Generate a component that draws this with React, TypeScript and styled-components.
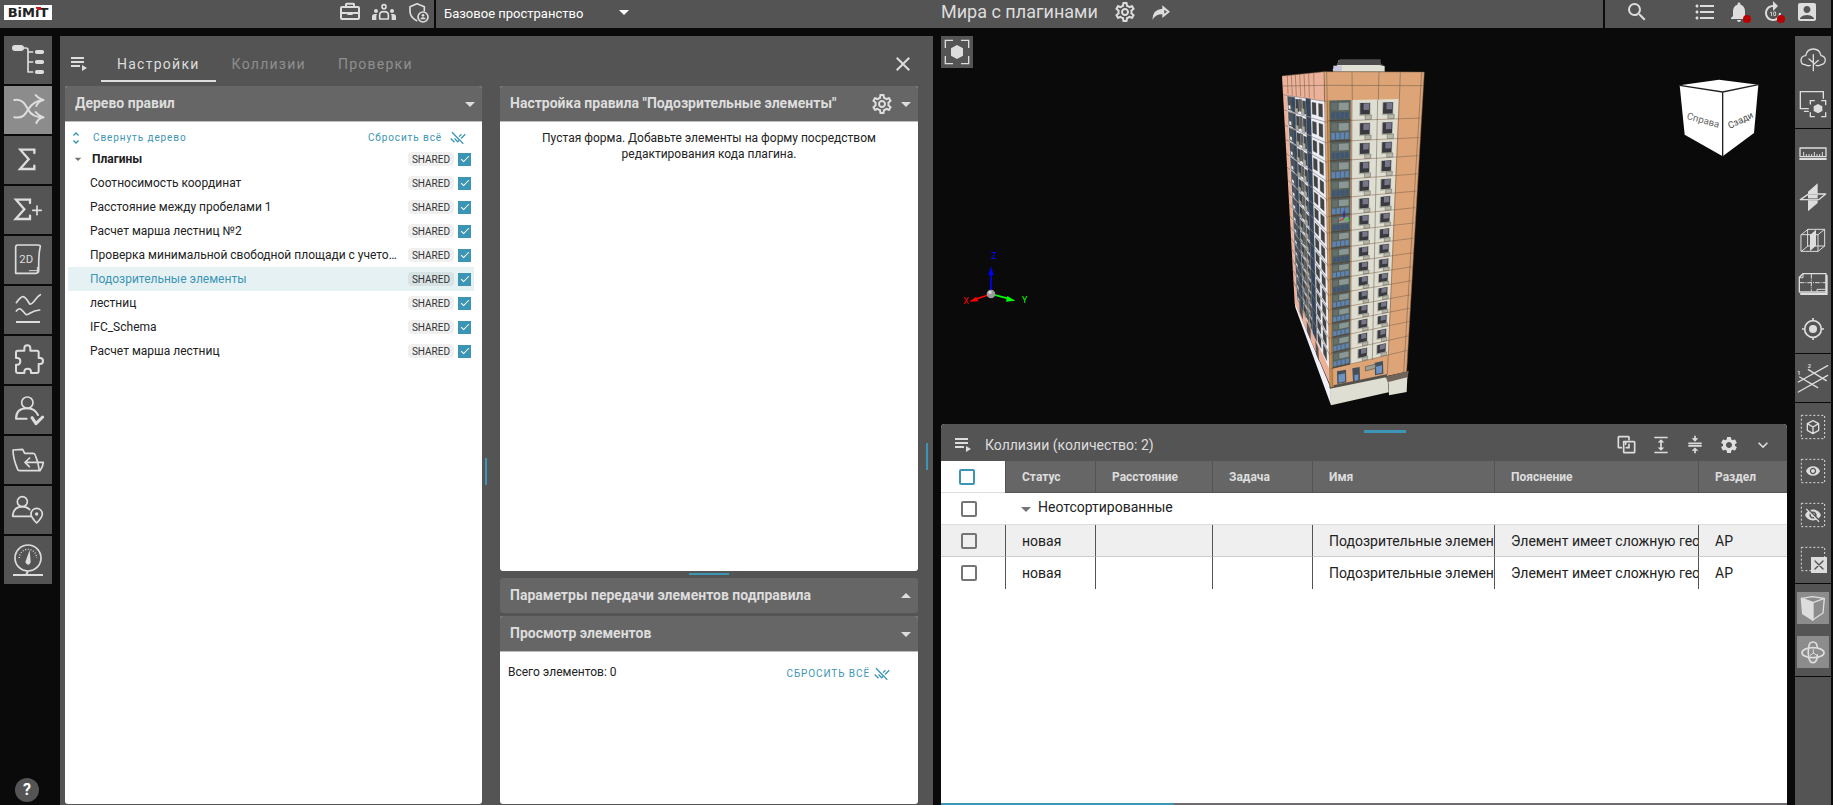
import React from "react";
import styled, { createGlobalStyle } from "styled-components";
import {
  MdAccountBox,
  MdArrowDropDown,
  MdArrowDropUp,
  MdClose,
  MdCompress,
  MdExpand,
  MdExpandMore,
  MdFormatListBulleted,
  MdForward10,
  MdNotifications,
  MdOutlineSettings,
  MdRemoveDone,
  MdSearch,
  MdSettings,
  MdUnfoldMore,
  MdVisibility,
  MdVisibilityOff,
} from "react-icons/md";

const color = {
  page: "#0a0a0a",
  panel: "#545454",
  header: "#666666",
  active: "#8c8c8c",
  light: "#dddddd",
  muted: "#8f8f8f",
  accent: "#3c95b4",
  text: "#222222",
  line: "#dddddd",
};

const GlobalStyle = createGlobalStyle`
  *, *::before, *::after { box-sizing: border-box; }
  html, body, #root { height: 100%; margin: 0; }
  body { background: ${color.page}; color: ${color.text}; font: 12px/16px Roboto, sans-serif; overflow: hidden; }
  button, select, input { font: inherit; color: inherit; margin: 0; }
  svg { display: block; flex: none; }
`;

/* ---------- page frame ---------- */

const Page = styled.div`
  display: grid;
  grid-template-rows: 28px minmax(0, 1fr);
  height: 100vh;
`;

const columns = "60px minmax(0, 873fr) 8px minmax(0, 846fr) 8px 38px";

const TopBar = styled.header`
  display: grid;
  grid-template-columns: ${columns};
  box-shadow: inset -2px 0 ${color.page};
  background: ${color.panel};
  color: ${color.light};
`;

const TopLeft = styled.div`
  grid-column: 1 / 4;
  display: flex;
`;

const TopTools = styled.div`
  display: flex;
  align-items: center;
  width: 436px;
  height: 28px;
  padding: 0 3px 4px 4px;
  border-right: 2px solid ${color.page};
`;

const Logo = styled.a`
  position: relative;
  width: 48px;
  height: 15px;
  margin-right: auto;
  background: #ffffff;
  color: #222222;
  font: bold 13px/16px "DejaVu Sans", sans-serif;
  text-align: center;
  text-decoration: none;
  overflow: hidden;
`;

const LogoDot = styled.i`
  position: absolute;
  left: 33px;
  top: 2px;
  width: 4px;
  height: 3px;
  background: #d8131b;
`;

const IconButton = styled.button<{ $w?: number }>`
  display: flex;
  align-items: center;
  justify-content: center;
  width: ${(p) => p.$w ?? 24}px;
  height: 24px;
  padding: 0;
  border: 0;
  background: none;
  color: ${color.light};
  cursor: pointer;
`;

const SpaceField = styled.label`
  position: relative;
  display: flex;
  align-items: center;
  height: 28px;
  svg {
    position: absolute;
    right: 4px;
    top: 0;
    color: #ffffff;
    pointer-events: none;
  }
`;

const SpaceSelect = styled.select`
  width: 204px;
  height: 28px;
  padding: 0 24px 0 8px;
  border: 0;
  background: none;
  appearance: none;
  color: #ffffff;
  font-size: 13px;
`;

const TopRight = styled.div`
  grid-column: 4 / 7;
  display: flex;
  min-width: 0;
`;

const ProjectTitle = styled.h1`
  margin: 0 14px 0 0;
  font-size: 18px;
  line-height: 24px;
  font-weight: 400;
  white-space: nowrap;
`;

const ProjectTools = styled.div`
  display: flex;
  gap: 10px;
`;

const UserTools = styled.nav`
  display: flex;
  gap: 10px;
  width: 230px;
  height: 28px;
  margin-left: auto;
  padding: 0 14px 0 20px;
  border-left: 2px solid ${color.page};
  > :first-child {
    margin-right: auto;
  }
`;

const Alerting = styled.span`
  position: relative;
  &::after {
    content: "";
    position: absolute;
    right: 0;
    top: 15px;
    width: 8px;
    height: 8px;
    border-radius: 50%;
    background: #b80000;
  }
`;

const Body = styled.main`
  display: grid;
  grid-template-columns: ${columns};
  padding-top: 8px;
  min-height: 0;
`;

/* ---------- left rail ---------- */

const LeftRail = styled.nav`
  grid-column: 1;
  display: flex;
  flex-direction: column;
  gap: 2px;
  padding: 0 8px 3px 4px;
`;

const RailButton = styled.button<{ $active?: boolean }>`
  width: 48px;
  height: 48px;
  padding: 0;
  border: 0;
  background: ${(p) => (p.$active ? color.active : color.panel)};
  color: ${color.light};
  cursor: pointer;
`;

const HelpButton = styled.button`
  width: 24px;
  height: 24px;
  margin: auto 0 0 11px;
  padding: 0;
  border: 0;
  border-radius: 50%;
  background: ${color.panel};
  color: #ffffff;
  font-size: 16px;
  font-weight: 700;
`;

/* ---------- rules panel ---------- */

const RulesPanel = styled.section`
  grid-column: 2;
  display: grid;
  grid-template-rows: 50px minmax(0, 1fr);
  background: ${color.panel};
  min-width: 0;
  min-height: 0;
`;

const PanelHead = styled.div`
  display: flex;
  align-items: center;
  padding: 6px 18px 0 7px;
`;

const Tabs = styled.div`
  display: flex;
  flex: 1;
  margin-left: 10px;
`;

const Tab = styled.button<{ $active?: boolean }>`
  height: 36px;
  padding: 2px 16px 0;
  border: 0;
  border-bottom: 2px solid ${(p) => (p.$active ? color.light : "transparent")};
  background: none;
  color: ${(p) => (p.$active ? color.light : color.muted)};
  font-size: 14px;
  letter-spacing: 0.09em;
  cursor: pointer;
`;

const PanelBody = styled.div`
  display: grid;
  grid-template-columns: 5px minmax(0, 417fr) 18px minmax(0, 418fr) 15px;
  padding-bottom: 1px;
  min-height: 0;
`;

const ColumnSplitter = styled.div<{ $inset: number; $top: number }>`
  display: flex;
  align-items: center;
  padding: ${(p) => p.$top}px 0 0 ${(p) => p.$inset}px;
  &::before {
    content: "";
    width: 2px;
    height: 27px;
    background: ${color.accent};
  }
`;

const TreeColumn = styled.div`
  grid-column: 2;
  display: flex;
  flex-direction: column;
`;

const FormColumn = styled.div`
  grid-column: 4;
  display: flex;
  flex-direction: column;
`;

const Card = styled.section<{ $height?: number }>`
  display: flex;
  flex-direction: column;
  flex: ${(p) => (p.$height ? `0 0 ${p.$height}px` : "1 1 0")};
  min-height: 0;
  border-radius: 3px;
  background: #ffffff;
  overflow: hidden;
`;

const CardHead = styled.header<{ $closed?: boolean }>`
  display: flex;
  align-items: center;
  flex: none;
  height: ${(p) => (p.$closed ? 35 : 36)}px;
  padding-left: 10px;
  border-bottom: ${(p) => (p.$closed ? "0" : "1px solid #bdbdbd")};
  background: ${color.header};
  color: ${color.light};
`;

const CardTitle = styled.h2`
  flex: 1;
  margin: 0;
  padding-bottom: 2px;
  font-size: 14px;
  line-height: 16px;
  font-weight: 700;
  white-space: nowrap;
  overflow: hidden;
`;

const RowSplitter = styled.div`
  display: flex;
  justify-content: center;
  flex: none;
  height: 7px;
  padding-top: 2px;
  &::before {
    content: "";
    width: 40px;
    height: 2px;
    background: ${color.accent};
  }
`;

const CardGap = styled.div`
  flex: none;
  height: 3px;
`;

const TreeTools = styled.div`
  display: flex;
  justify-content: space-between;
  height: 25px;
  padding: 6px 16px 0 3px;
`;

const TextButton = styled.button<{ $gap: number }>`
  display: flex;
  align-items: center;
  gap: ${(p) => p.$gap}px;
  height: 20px;
  padding: 0;
  border: 0;
  background: none;
  color: ${color.accent};
  font-size: 10px;
  letter-spacing: 0.09em;
  cursor: pointer;
`;

const TreeList = styled.ul`
  margin: 0;
  padding: 0 8px 0 3px;
  list-style: none;
`;

const TreeRow = styled.li<{ $selected?: boolean; $group?: boolean }>`
  display: flex;
  align-items: center;
  height: 24px;
  padding: 0 3px 0 ${(p) => (p.$group ? 2 : 22)}px;
  background: ${(p) => (p.$selected ? "#e5f1f3" : "transparent")};
  color: ${(p) => (p.$selected ? color.accent : color.text)};
  font-weight: ${(p) => (p.$group ? 700 : 400)};
  > svg {
    margin-right: 6px;
    color: #757575;
  }
`;

const RowLabel = styled.label`
  flex: 1;
  min-width: 0;
  margin-right: 10px;
  overflow: hidden;
  text-overflow: ellipsis;
  white-space: nowrap;
`;

const Badge = styled.span`
  height: 14px;
  margin-right: 4px;
  padding: 0 4px;
  border-radius: 4px;
  background: rgba(0, 0, 0, 0.06);
  color: #333333;
  font-size: 10px;
  line-height: 15px;
  font-weight: 400;
`;

const Tick = styled.input`
  position: relative;
  width: 13px;
  height: 13px;
  appearance: none;
  border: 1px solid ${color.accent};
  background: #ffffff;
  &:checked {
    background: ${color.accent};
  }
  &:checked::after {
    content: "";
    position: absolute;
    left: 4px;
    top: 0;
    width: 4px;
    height: 8px;
    border: solid #ffffff;
    border-width: 0 1px 1px 0;
    transform: rotate(45deg);
  }
`;

const EmptyForm = styled.p`
  margin: 8px 40px;
  text-align: center;
`;

const ElementTools = styled.div`
  display: flex;
  justify-content: space-between;
  padding: 12px 28px 0 8px;
`;

/* ---------- viewer ---------- */

const Workspace = styled.div`
  grid-column: 4;
  display: grid;
  grid-template-rows: minmax(0, 388fr) minmax(0, 381fr);
  min-height: 0;
`;

const Viewer = styled.section`
  position: relative;
  overflow: hidden;
`;

const FocusButton = styled.button`
  width: 32px;
  height: 32px;
  padding: 0;
  border: 0;
  background: ${color.panel};
  color: ${color.light};
`;

const Model = styled.svg`
  position: absolute;
  left: calc(50% - 94px);
  top: 14px;
`;

const AxisGizmo = styled.svg`
  position: absolute;
  left: 19px;
  top: 214px;
`;

const ViewCube = styled.svg`
  position: absolute;
  right: 28px;
  top: 43px;
`;

/* ---------- collisions ---------- */

const Collisions = styled.section`
  display: flex;
  flex-direction: column;
  border-radius: 4px 4px 0 0;
  background: #ffffff;
  overflow: hidden;
  min-height: 0;
`;

const CollisionsHead = styled.header`
  position: relative;
  display: flex;
  align-items: center;
  flex: none;
  height: 37px;
  padding: 5px 14px 0 13px;
  background: ${color.panel};
  color: ${color.light};
  &::before {
    content: "";
    position: absolute;
    left: 50%;
    top: 6px;
    width: 42px;
    height: 3px;
    background: ${color.accent};
  }
`;

const CollisionsTitle = styled.h2`
  flex: 1;
  margin: 0 0 0 13px;
  font-size: 14px;
  line-height: 16px;
  font-weight: 400;
`;

const HeadTools = styled.div`
  display: flex;
  gap: 14px;
`;

const Grid = styled.table`
  width: 100%;
  table-layout: fixed;
  border-collapse: separate;
  border-spacing: 0;
`;

const Col = styled.col<{ $w?: number }>`
  width: ${(p) => (p.$w ? `${p.$w}px` : "auto")};
`;

const HeadCell = styled.th`
  height: 32px;
  padding: 0 0 0 16px;
  border-left: 1px solid ${color.panel};
  border-bottom: 1px solid ${color.panel};
  background: ${color.header};
  color: ${color.light};
  font-size: 12px;
  font-weight: 700;
  text-align: left;
`;

const SelectAllCell = styled.th`
  height: 32px;
  padding: 0 0 0 18px;
  border-bottom: 1px solid ${color.line};
  text-align: left;
`;

const SelectCell = styled.td`
  height: 32px;
  padding: 0 0 0 20px;
  border-bottom: 1px solid ${color.line};
`;

const GroupCell = styled.td`
  padding: 0 0 4px 9px;
  border-bottom: 1px solid ${color.line};
  font-size: 14px;
`;

const GroupToggle = styled.button`
  display: flex;
  align-items: center;
  height: 24px;
  padding: 0;
  border: 0;
  background: none;
  svg {
    margin-top: 4px;
    color: #757575;
  }
`;

const DataRow = styled.tr<{ $shaded?: boolean }>`
  background: ${(p) => (p.$shaded ? "#efefef" : "transparent")};
  td {
    border-bottom: ${(p) => (p.$shaded ? "1px solid #cccccc" : "0")};
  }
`;

const DataCell = styled.td`
  height: 32px;
  padding: 0 0 0 16px;
  border-left: 1px solid ${color.panel};
  font-size: 14px;
  white-space: nowrap;
  overflow: hidden;
`;

const Box = styled.input<{ $accent?: boolean }>`
  display: block;
  width: 16px;
  height: 16px;
  appearance: none;
  border: 2px solid ${(p) => (p.$accent ? color.accent : "#757575")};
  border-radius: 2px;
  &:checked {
    background: ${color.accent};
  }
`;

const ScrollTrack = styled.div`
  display: grid;
  grid-template-columns: 233fr 613fr;
  flex: none;
  height: 2px;
  margin-top: auto;
  background: #6e6a6e;
  &::before {
    content: "";
    background: ${color.accent};
  }
`;

/* ---------- right rail ---------- */

const RightRail = styled.nav`
  grid-column: 6;
  display: flex;
  flex-direction: column;
  margin-right: 2px;
  background: ${color.panel};
`;

const ToolGroup = styled.div`
  padding: 2px 0;
  border-bottom: 1px solid ${color.page};
`;

const ToolSlot = styled.div`
  display: flex;
  align-items: center;
  justify-content: center;
  height: 44px;
`;

const ToolButton = styled.button<{ $active?: boolean }>`
  width: 32px;
  height: 32px;
  padding: 0;
  border: 0;
  background: ${(p) => (p.$active ? color.active : "none")};
  color: ${color.light};
  cursor: pointer;
`;

/* ---------- icons ---------- */

const Drawing = ({ size, box, width = 6, children }: { size: number; box: number; width?: number; children: React.ReactNode }) => (
  <svg
    width={size}
    height={size}
    viewBox={`0 0 ${box} ${box}`}
    fill="none"
    stroke="currentColor"
    strokeWidth={width}
    strokeLinecap="round"
    strokeLinejoin="round"
    aria-hidden
  >
    {children}
  </svg>
);

const PlaylistIcon = () => (
  <svg width="18" height="16" viewBox="0 0 18 16" fill="currentColor" aria-hidden>
    <path d="M1 1h13v2H1zM1 5h13v2H1zM1 9h9v2H1zM12 9l5 3-5 3z" />
  </svg>
);

const BriefcaseIcon = () => (
  <Drawing size={24} box={72}>
    <rect x="9" y="21" width="54" height="36" rx="3" />
    <path d="M24 20v-7q0-2 2-2h20q2 0 2 2v7M9 39h16M47 39h16" />
    <rect x="28" y="36" width="16" height="9" fill="currentColor" stroke="none" />
    <path d="M26 39h20" strokeWidth="4" />
  </Drawing>
);

const MeetingIcon = () => (
  <Drawing size={24} box={72} width={5}>
    <circle cx="36" cy="20" r="6" />
    <path d="M23 57V44q0-9 13-9t13 9v13z" />
    <g fill="currentColor" stroke="none">
      <circle cx="12" cy="33" r="6" />
      <circle cx="60" cy="33" r="6" />
      <path d="M0 60V50q0-8 9-8h6q-2 4-2 8v10zM72 60V50q0-8-9-8h-6q2 4 2 8v10z" />
    </g>
  </Drawing>
);

const ShieldUserIcon = () => (
  <Drawing size={24} box={72} width={5}>
    <path d="M52 32V20L30 11 9 20v14q0 18 20 28" />
    <circle cx="48" cy="51" r="15" />
    <g fill="currentColor" stroke="none">
      <circle cx="48" cy="46" r="4" />
      <path d="M40 58q0-6 8-6t8 6z" />
    </g>
  </Drawing>
);

const ShareIcon = () => (
  <svg width="24" height="24" viewBox="0 0 72 72" fill="currentColor" aria-hidden>
    <path d="M40 16l23 19-23 19V43Q22 42 10 59q1-31 30-33z" />
    <path d="M46 29l8 6-8 6z" fill={color.panel} />
  </svg>
);

const MergeIcon = () => (
  <Drawing size={20} box={60} width={5}>
    <path d="M36 14V7q0-2-2-2H6Q4 5 4 7v29q0 2 2 2h7" />
    <path d="M28 38h8V28M20 28v-8h6" />
    <path d="M20 30v21q0 2 2 2h29q2 0 2-2V22q0-2-2-2H28q-2 0-2 2v6" />
  </Drawing>
);

const FocusShape = () => (
  <svg width="32" height="32" viewBox="0 0 96 96" aria-hidden>
    <path d="M13 36V13h23M60 13h23v23M83 60v23H60M36 83H13V60" fill="none" stroke="currentColor" strokeWidth="4" />
    <path d="M48 27l18 10v22L48 69 30 59V37z" fill="currentColor" />
  </svg>
);

const railIcons: { label: string; art: React.ReactNode; active?: boolean }[] = [
  {
    label: "Дерево",
    art: (
      <>
        <g fill="currentColor" stroke="none">
          <rect x="24" y="27" width="36" height="18" rx="9" />
          <rect x="93" y="42" width="27" height="12" rx="5" />
          <rect x="93" y="72" width="27" height="12" rx="5" />
          <rect x="93" y="102" width="27" height="12" rx="5" />
        </g>
        <path d="M58 36h8q6 0 6 6v66h14M72 48h14M72 78h14" strokeWidth="5" />
      </>
    ),
  },
  {
    label: "Коллизии",
    active: true,
    art: (
      <>
        <path d="M31 42c26-4 34 15 42 30s22 22 45 22" />
        <path d="M31 94c26 4 34-10 42-24s22-26 45-28" />
        <path d="M95 27q8 11 23 15-15 3-21 18M95 78q8 11 23 16-15 3-21 17" />
      </>
    ),
  },
  { label: "Сумма", art: <path d="M91 51V41H49l25 29-26 29h43V89" strokeWidth="7" strokeLinejoin="miter" /> },
  {
    label: "Сумма плюс",
    art: (
      <>
        <path d="M78 51V41H36l25 29-26 29h43V89" strokeWidth="7" strokeLinejoin="miter" />
        <path d="M86 73h26M99 60v26" strokeWidth="5" />
      </>
    ),
  },
  {
    label: "Чертежи",
    art: (
      <>
        <path d="M35 112V34q0-7 6-7h60q8 0 8 4-5 20-5 60v12q0 9-8 9z" strokeWidth="5" />
        <path d="M76 104h24M100 94v14" strokeWidth="3" />
        <text x="46" y="80" fontSize="34" fill="currentColor" stroke="none">
          2D
        </text>
      </>
    ),
  },
  {
    label: "Графики",
    art: (
      <>
        <path d="M37 50q13-18 20-18t20 22q6 3 18-14 6-10 14-14" strokeWidth="5" />
        <path d="M37 75q8-10 14-5t14 15q4 3 14-4 12-7 28-9" strokeWidth="5" />
        <path d="M36 108h72" strokeLinecap="butt" />
      </>
    ),
  },
  {
    label: "Плагины",
    art: (
      <path d="M41 44h20v-7q0-9 9-9t9 9v7h20q5 0 5 5v17h4q9 0 9 9t-9 9h-4v21q0 6-6 6H81v-4q0-9-10-9t-10 9v4H42q-6 0-6-6V86h5q8-1 8-10t-8-10h-5V49q0-5 5-5z" />
    ),
  },
  {
    label: "Проверяющий",
    art: (
      <>
        <circle cx="70" cy="50" r="17" strokeWidth="5" />
        <path d="M68 98H36q0-31 34-31 22 0 32 20" />
        <path d="M84 95l12 18 20-20" strokeWidth="9" />
      </>
    ),
  },
  {
    label: "Импорт",
    art: (
      <>
        <path d="M106 104H47q-5 0-7-6-13-32-13-56l29-2 6 12h26q4 0 6 6 9 20 12 46z" strokeWidth="5" />
        <path d="M108 104q9-12 10-25H64M77 66L63 79l13 13" strokeWidth="5" />
      </>
    ),
  },
  {
    label: "Местоположение",
    art: (
      <>
        <circle cx="55" cy="47" r="15" strokeWidth="5" />
        <path d="M80 91H26q2-29 29-29 14 0 22 9" strokeWidth="5" />
        <path d="M98 111Q81 94 81 84a17 17 0 0 1 34 0q0 10-17 27z" strokeWidth="5" />
        <circle cx="98" cy="84" r="5" fill="currentColor" stroke="none" />
      </>
    ),
  },
  {
    label: "Показатели",
    art: (
      <>
        <circle cx="72" cy="66" r="39" strokeWidth="5" />
        <path d="M46 66a26 26 0 0 1 52 0" strokeWidth="4" strokeDasharray="3 5" strokeLinecap="butt" />
        <path d="M77 42l3 36q-2 9-8 8t-8-8z" fill="currentColor" stroke="none" />
        <path d="M72 106l-6 11M27 117h90" strokeLinecap="butt" />
      </>
    ),
  },
];

const Dashes = () => <rect x="13" y="13" width="70" height="70" strokeWidth="3" strokeDasharray="6 6" strokeLinecap="butt" />;

const toolGroups: { label: string; art: React.ReactNode; active?: boolean }[][] = [
  [
    {
      label: "Окружение",
      art: (
        <>
          <path d="M40 64q-8 3-16-2-12 0-12-14 1-12 14-13 4-20 23-20t23 20q12 2 13 13-1 12-12 14-8 5-16 2" strokeWidth="4" />
          <path d="M49 80V32M49 62l15-13M49 56L36 45" strokeWidth="4" />
        </>
      ),
    },
    {
      label: "Показать экран",
      art: (
        <>
          <path d="M34 62H10V11h69v20M22 70h12" strokeWidth="4" strokeLinejoin="miter" />
          <path d="M40 48V38h12M74 38h12v12M86 74v12H74M52 86H40V74" strokeWidth="4" strokeLinejoin="miter" />
          <path d="M63 48l13 7v14l-13 7-13-7V55z" fill="currentColor" stroke="none" />
        </>
      ),
    },
  ],
  [
    {
      label: "Линейка",
      art: (
        <>
          <rect x="9" y="33" width="78" height="26" strokeWidth="4" />
          <path d="M20 58V45M28 58v-7M36 58v-7M44 58v-7M52 58V45M60 58v-7M68 58v-7M76 58V45" strokeWidth="3" strokeLinecap="butt" />
          <path d="M7 66h82" strokeLinecap="butt" />
        </>
      ),
    },
    {
      label: "Сечение плоскостью",
      art: (
        <>
          <path d="M33 32L62 7v33H33zM33 58h29v8L33 91z" fill="currentColor" stroke="none" />
          <path d="M33 40h29v14H33z" fill="currentColor" stroke="none" />
          <path d="M33 40L10 56h55l21-17H62" strokeWidth="4" />
          <path d="M33 53h29" stroke={color.panel} strokeWidth="2" strokeLinecap="butt" />
        </>
      ),
    },
    {
      label: "Сечение объёмом",
      art: (
        <>
          <path d="M13 29h50v50H13zM33 13h50v50H33zM13 29l20-16M63 29l20-16M13 79l20-16M63 79l20-16" strokeWidth="3" />
          <path d="M39 30l18-16v48L39 78z" fill="currentColor" stroke="none" />
        </>
      ),
    },
    {
      label: "План этажа",
      art: (
        <>
          <path d="M18 14h69v55H7V25z" strokeWidth="4" />
          <path d="M89 20v55H12" strokeWidth="6" strokeLinejoin="miter" />
          <path d="M43 15v52M8 41h78" strokeWidth="3" strokeDasharray="14 3 3 3" strokeLinecap="butt" />
          <path d="M60 67v-6h24M7 25l11-11v11z" strokeWidth="3" />
        </>
      ),
    },
    {
      label: "Центрировать",
      art: (
        <>
          <circle cx="48" cy="48" r="25" strokeWidth="5" />
          <circle cx="48" cy="48" r="12" fill="currentColor" stroke="none" />
          <path d="M48 15v9M48 72v9M15 48h9M72 48h9" strokeWidth="5" strokeLinecap="butt" />
        </>
      ),
    },
  ],
  [
    {
      label: "Оси",
      art: (
        <>
          <path d="M4 60L92 11M4 90l88-50M8 45l54 32M34 23l54 33" strokeWidth="4" />
          <text x="1" y="38" fontSize="17" fontWeight="700" fill="currentColor" stroke="none">
            1
          </text>
          <text x="32" y="18" fontSize="17" fontWeight="700" fill="currentColor" stroke="none">
            2
          </text>
        </>
      ),
    },
  ],
  [
    {
      label: "Выделить объект",
      art: (
        <>
          <Dashes />
          <path d="M48 29l17 9v20l-17 10-17-10V38zM31 38l17 10 17-10M48 48v20" strokeWidth="4" />
        </>
      ),
    },
    {
      label: "Показать",
      art: (
        <>
          <Dashes />
          <MdVisibility x="25" y="25" size={46} strokeWidth={0} />
        </>
      ),
    },
    {
      label: "Скрыть",
      art: (
        <>
          <Dashes />
          <MdVisibilityOff x="22" y="22" size={52} strokeWidth={0} />
        </>
      ),
    },
    {
      label: "Сбросить выделение",
      art: (
        <>
          <Dashes />
          <rect x="42" y="42" width="48" height="48" fill="currentColor" stroke="none" />
          <path d="M54 54l24 24M78 54L54 78" stroke={color.panel} strokeWidth="4" />
        </>
      ),
    },
  ],
  [
    {
      label: "Объёмный вид",
      active: true,
      art: (
        <>
          <path d="M14 20l33 13v50L18 64z" fill="currentColor" />
          <path d="M14 19l32-5 36 5-34 13zM82 19l-4 44-31 21" strokeWidth="4" />
        </>
      ),
    },
    {
      label: "Вращение",
      active: true,
      art: (
        <>
          <ellipse cx="48" cy="50" rx="33" ry="15" strokeWidth="5" />
          <path d="M35 35q1-17 13-17t13 17M35 35q-3 14 0 28 3 17 13 17t13-17q-1-2 0-6" strokeWidth="5" />
          <path d="M49 41v10l-9 7M49 51l10 7" strokeWidth="3" />
        </>
      ),
    },
  ],
];

/* ---------- building drawing ---------- */

type Pt = [number, number];
const floorY = [150, 211, 272, 329, 386, 440, 492, 540, 588, 634, 678, 722, 766, 808, 850, 895, 940];
const lerp = (a: number, b: number, t: number) => a + (b - a) * t;
const fmt = (pts: Pt[]) => pts.map(([x, y]) => `${x.toFixed(1)},${y.toFixed(1)}`).join(" ");

const levelAt = (f: number) => {
  const k = Math.min(15, Math.floor(f));
  return lerp(floorY[k], floorY[k + 1], f - k);
};

const front = (topX: number, bottomX: number, f: number): Pt => {
  const y = levelAt(f);
  const x = lerp(topX, bottomX, (y - 150) / 790);
  return [x, y - (0.02 + (0.22 * f) / 16) * (x - 250)];
};

const frontQuad = (t1: number, b1: number, t2: number, b2: number, f1: number, f2: number) =>
  fmt([front(t1, b1, f1), front(t2, b2, f1), front(t2, b2, f2), front(t1, b1, f2)]);

const side = (s: number, f: number): Pt => {
  const t = (levelAt(f) - 150) / 790;
  return [lerp(lerp(50, 80, t), lerp(165, 177, t), s), lerp(lerp(136, 745, t), lerp(154, 955, t), s)];
};

const sideQuad = (s1: number, s2: number, f1: number, f2: number) =>
  fmt([side(s1, f1), side(s2, f1), side(s2, f2), side(s1, f2)]);

const floors = Array.from({ length: 16 }, (_, i) => i);
const sideWindows = [
  { s: 0.02, w: 0.11, top: 0.05, bottom: 0.9, fill: "#4c535a" },
  { s: 0.13, w: 0.08, top: 0.05, bottom: 0.95, fill: "#34495f" },
  { s: 0.23, w: 0.08, top: 0.14, bottom: 0.84, fill: "#414444" },
  { s: 0.32, w: 0.07, top: 0.1, bottom: 0.8, fill: "#5d6462" },
  { s: 0.41, w: 0.08, top: 0.16, bottom: 0.88, fill: "#454949" },
  { s: 0.5, w: 0.12, top: 0, bottom: 0.96, fill: "#33455c" },
  { s: 0.66, w: 0.1, top: 0.16, bottom: 0.78, fill: "#414443" },
  { s: 0.83, w: 0.1, top: 0.16, bottom: 0.8, fill: "#414443" },
];

const Building = () => (
  <Model width="170" height="370" viewBox="0 0 510 1110" role="img" aria-label="Модель здания">
    <path d="M188 58l14-12 4-15h120l6 10v5l12 2v17H190z" fill="#e0e0d4" />
    <path d="M200 43l10-15h122v14l10 3H200z" fill="#4c4c4c" />
    <path d="M190 47h26v16h-26z" fill="#c9c7dc" />
    <path d="M36 78l126-13 21 947L74 758z" fill="#ecb199" />
    <path d="M162 65l301 1-53 899-230 50z" fill="#dca477" />
    <path d="M74 756l108 258 1 52L76 772z" fill="#efeff8" />
    <path d="M180 1015l172-38 4 50-173 39z" fill="#deded2" />
    <path d="M346 980l70-18-3 22-57 16z" fill="#70645a" />
    <path d="M355 996l57-14-2 44-53 10z" fill="#deded2" />
    <path d="M179 1012l172-35" stroke="#55504a" strokeWidth="8" />

    <polygon points={sideQuad(0, 1, 0, 16)} fill="#eeeef6" />
    {floors.map((k) =>
      sideWindows.map((c, i) => (
        <polygon
          key={`${k}-${i}`}
          points={sideQuad(c.s, c.s + c.w, k + c.top, k + c.bottom)}
          fill={c.fill}
          stroke="#3d3d3d"
          strokeWidth="1"
        />
      )),
    )}
    {floors.map((k) => (
      <g key={k} fill="#aaa9a0" stroke="#5c5c58" strokeWidth="1">
        <polygon points={sideQuad(0.2, 0.28, k + 0.68, k + 0.96)} />
        <polygon points={sideQuad(0.37, 0.45, k + 0.6, k + 0.94)} />
        <polygon points={sideQuad(0.03, 0.09, k + 0.6, k + 0.84)} fill="#f4f4f8" />
      </g>
    ))}
    {floors.map((k) => (
      <polyline key={k} points={fmt([side(-0.1, k), side(0, k), side(1, k), side(1.1, k)])} fill="none" stroke="#5f5b58" strokeWidth="1.5" />
    ))}
    <path d="M88 758l10 26 1 26-10-24zM110 812l12 28v30l-11-26zM136 872l9 22 2 40-9-22z" fill="#55504e" />

    <path d="M169 150h10l12 860-10 2z" fill="#cf9450" />
    <polygon points={frontQuad(178, 188, 242, 240, 0, 16)} fill="#54615f" />
    <polygon points={frontQuad(246, 242, 386, 354, 0, 16)} fill="#deded2" />
    {floors.map((k) => {
      const lit = k % 2 === 1 || k > 11;
      return (
        <g key={k}>
          <polygon points={frontQuad(206, 208, 236, 236, k + 0.12, k + 0.48)} fill="#8b9792" />
          <polygon points={frontQuad(184, 192, 202, 205, k + 0.12, k + 0.48)} fill="#66706b" />
          {[0, 1, 2, 3].map((n) => (
            <polygon
              key={n}
              points={frontQuad(183 + n * 14, 191 + n * 12, 194 + n * 14, 200 + n * 12, k + 0.58, k + 0.9)}
              fill={lit ? "#5f84b3" : "#405672"}
            />
          ))}
          <polygon points={frontQuad(178, 188, 242, 240, k + 0.95, k + 1.02)} fill="#3e3c38" />
          {[
            [268, 262],
            [337, 318],
          ].map(([t, b]) => (
            <g key={t}>
              <polygon points={frontQuad(t, b, t + 34, b + 30, k + 0.14, k + 0.8)} fill="#b4b4a6" />
              <polygon points={frontQuad(t + 3, b + 3, t + 32, b + 28, k + 0.16, k + 0.72)} fill="#383a40" />
              <polygon points={frontQuad(t + 13, b + 11, t + 30, b + 26, k + 0.18, k + 0.5)} fill="#777789" />
              <polygon points={frontQuad(t + 18, b + 15, t + 37, b + 31, k + 0.76, k + 0.98)} fill="#b6b6a9" stroke="#66665e" strokeWidth="1.5" />
            </g>
          ))}
        </g>
      );
    })}
    {floors.map((k) => (
      <polyline key={k} points={fmt([front(170, 180, k + 1), front(455, 412, k + 1)])} stroke="#7a5e48" strokeWidth="1.5" />
    ))}
    <path
      d="M162 65l18 950M170 65l17 945M36 78l126-13 301 1-53 899M38 108l124-2 298 1M246 67l1 83M327 67l-2 83M391 67l-3 83-36 825M455 67l-54 900M323 150l-16 780M246 150l-4 790M52 78l2 54M64 76l3 60M76 75l3 64M89 73l3 66M102 72l3 70M116 71l2 72M131 69l2 76"
      fill="none"
      stroke="#6b5443"
      strokeWidth="1.5"
    />
    <path d="M201 964l27-5 1 38-27 5zM247 955l22-4 1 38-21 5zM314 938l25-5 1 38-25 5z" fill="#444f5c" />
    <path d="M205 974l20-4v24l-19 4zM318 950l18-4v22l-17 4zM253 976l12-3v16l-11 3z" fill="#6d93c2" />
    <path d="M286 950l30-7v12l-30 8z" fill="#9d9d90" stroke="#54544c" strokeWidth="2" />
    <path d="M222 506v-22" stroke="#1414d0" strokeWidth="3" />
    <path d="M222 506l-14 6" stroke="#e02020" strokeWidth="3" />
    <path d="M222 506l18 5" stroke="#20e020" strokeWidth="3" />
  </Model>
);

const Axes = () => (
  <AxisGizmo width="70" height="57" viewBox="90 750 210 171" fontSize="27" aria-label="Оси X, Y, Z">
    <path d="M183 882v-60" stroke="#0000ff" strokeWidth="5" />
    <path d="M183 799l8 26h-16z" fill="#0000ff" />
    <path d="M183 882l-44 15" stroke="#ff0000" strokeWidth="5" />
    <path d="M117 905l22-15 6 14z" fill="#ff0000" />
    <path d="M183 882l50 13" stroke="#00ff00" strokeWidth="5" />
    <path d="M256 902l-28 3 4-17z" fill="#00ff00" />
    <circle cx="183" cy="882" r="13" fill="#9a9a9a" />
    <circle cx="180" cy="877" r="5" fill="#d8d8d8" />
    <text x="184" y="778" fill="#0000ff">Z</text>
    <text x="100" y="913" fill="#ff0000">X</text>
    <text x="276" y="908" fill="#00ff00">Y</text>
  </AxisGizmo>
);

const Cube = () => (
  <ViewCube width="80" height="78" viewBox="778 238 240 234" aria-label="Ориентация вида">
    <path d="M780 257l118-17 118 15-13 145-94 70-114-65z" fill="#ffffff" />
    <path d="M780 257l129 20 107-22M909 277v193" fill="none" stroke="#222222" strokeWidth="4" />
    <text transform="translate(800 357) rotate(16)" fontSize="29" fill="#666666">
      Справа
    </text>
    <text transform="translate(930 388) rotate(-26)" fontSize="28" fill="#444444">
      Сзади
    </text>
  </ViewCube>
);

/* ---------- data ---------- */

const rules = [
  "Соотносимость координат",
  "Расстояние между пробелами 1",
  "Расчет марша лестниц №2",
  "Проверка минимальной свободной площади с учетом мебели",
  "Подозрительные элементы",
  "лестниц",
  "IFC_Schema",
  "Расчет марша лестниц",
];

const headings = ["Статус", "Расстояние", "Задача", "Имя", "Пояснение", "Раздел"];
const collision = ["новая", "", "", "Подозрительные элементы", "Элемент имеет сложную геометрию", "АР"];

const Shared = ({ id }: { id: string }) => (
  <>
    <Badge>SHARED</Badge>
    <Tick type="checkbox" id={id} defaultChecked />
  </>
);

export default function App() {
  return (
    <Page>
      <GlobalStyle />
      <TopBar>
        <TopLeft>
          <TopTools>
            <Logo href="#">
              BiMiT
              <LogoDot />
            </Logo>
            <IconButton $w={24} aria-label="Проекты">
              <BriefcaseIcon />
            </IconButton>
            <IconButton $w={44} aria-label="Команда">
              <MeetingIcon />
            </IconButton>
            <IconButton $w={25} aria-label="Доступ">
              <ShieldUserIcon />
            </IconButton>
          </TopTools>
          <SpaceField>
            <SpaceSelect aria-label="Пространство">
              <option>Базовое пространство</option>
            </SpaceSelect>
            <MdArrowDropDown size={24} />
          </SpaceField>
        </TopLeft>
        <TopRight>
          <ProjectTitle>Мира с плагинами</ProjectTitle>
          <ProjectTools>
            <IconButton $w={26} aria-label="Настройки проекта">
              <MdOutlineSettings size={24} />
            </IconButton>
            <IconButton $w={26} aria-label="Поделиться">
              <ShareIcon />
            </IconButton>
          </ProjectTools>
          <UserTools>
            <IconButton aria-label="Поиск">
              <MdSearch size={24} />
            </IconButton>
            <IconButton aria-label="Список">
              <MdFormatListBulleted size={24} />
            </IconButton>
            <Alerting>
              <IconButton aria-label="Уведомления">
                <MdNotifications size={24} />
              </IconButton>
            </Alerting>
            <Alerting>
              <IconButton aria-label="Обновления">
                <MdForward10 size={24} />
              </IconButton>
            </Alerting>
            <IconButton aria-label="Профиль">
              <MdAccountBox size={24} />
            </IconButton>
          </UserTools>
        </TopRight>
      </TopBar>

      <Body>
        <LeftRail>
          {railIcons.map((item) => (
            <RailButton key={item.label} $active={item.active} aria-label={item.label}>
              <Drawing size={48} box={144}>
                {item.art}
              </Drawing>
            </RailButton>
          ))}
          <HelpButton>?</HelpButton>
        </LeftRail>

        <RulesPanel>
          <PanelHead>
            <IconButton aria-label="Меню панели">
              <PlaylistIcon />
            </IconButton>
            <Tabs role="tablist">
              <Tab role="tab" $active>
                Настройки
              </Tab>
              <Tab role="tab">Коллизии</Tab>
              <Tab role="tab">Проверки</Tab>
            </Tabs>
            <IconButton aria-label="Закрыть">
              <MdClose size={24} />
            </IconButton>
          </PanelHead>
          <PanelBody>
            <TreeColumn>
              <Card>
                <CardHead>
                  <CardTitle>Дерево правил</CardTitle>
                  <IconButton aria-label="Свернуть">
                    <MdArrowDropDown size={24} />
                  </IconButton>
                </CardHead>
                <TreeTools>
                  <TextButton $gap={9}>
                    <MdUnfoldMore size={16} />
                    Свернуть дерево
                  </TextButton>
                  <TextButton $gap={8}>
                    Сбросить всё
                    <MdRemoveDone size={16} />
                  </TextButton>
                </TreeTools>
                <TreeList>
                  <TreeRow $group>
                    <MdArrowDropDown size={16} />
                    <RowLabel htmlFor="plugins">Плагины</RowLabel>
                    <Shared id="plugins" />
                  </TreeRow>
                  {rules.map((rule, i) => (
                    <TreeRow key={rule} $selected={i === 4}>
                      <RowLabel htmlFor={`rule-${i}`}>{rule}</RowLabel>
                      <Shared id={`rule-${i}`} />
                    </TreeRow>
                  ))}
                </TreeList>
              </Card>
            </TreeColumn>
            <ColumnSplitter $inset={3} $top={52} />
            <FormColumn>
              <Card>
                <CardHead>
                  <CardTitle>Настройка правила "Подозрительные элементы"</CardTitle>
                  <IconButton aria-label="Настройки правила">
                    <MdOutlineSettings size={24} />
                  </IconButton>
                  <IconButton aria-label="Свернуть">
                    <MdArrowDropDown size={24} />
                  </IconButton>
                </CardHead>
                <EmptyForm>Пустая форма. Добавьте элементы на форму посредством редактирования кода плагина.</EmptyForm>
              </Card>
              <RowSplitter />
              <Card $height={35}>
                <CardHead $closed>
                  <CardTitle>Параметры передачи элементов подправила</CardTitle>
                  <IconButton aria-label="Развернуть">
                    <MdArrowDropUp size={24} />
                  </IconButton>
                </CardHead>
              </Card>
              <CardGap />
              <Card $height={188}>
                <CardHead>
                  <CardTitle>Просмотр элементов</CardTitle>
                  <IconButton aria-label="Свернуть">
                    <MdArrowDropDown size={24} />
                  </IconButton>
                </CardHead>
                <ElementTools>
                  <span>Всего элементов: 0</span>
                  <TextButton $gap={4}>
                    СБРОСИТЬ ВСЁ
                    <MdRemoveDone size={16} />
                  </TextButton>
                </ElementTools>
              </Card>
            </FormColumn>
            <ColumnSplitter $inset={8} $top={22} />
          </PanelBody>
        </RulesPanel>

        <Workspace>
          <Viewer>
            <FocusButton aria-label="Показать всё">
              <FocusShape />
            </FocusButton>
            <Building />
            <Axes />
            <Cube />
          </Viewer>
          <Collisions>
            <CollisionsHead>
              <PlaylistIcon />
              <CollisionsTitle>Коллизии (количество: 2)</CollisionsTitle>
              <HeadTools>
                <IconButton $w={20} aria-label="Объединить">
                  <MergeIcon />
                </IconButton>
                <IconButton $w={20} aria-label="Развернуть строки">
                  <MdExpand size={20} />
                </IconButton>
                <IconButton $w={20} aria-label="Сжать строки">
                  <MdCompress size={20} />
                </IconButton>
                <IconButton $w={20} aria-label="Настройки таблицы">
                  <MdSettings size={20} />
                </IconButton>
                <IconButton $w={20} aria-label="Скрыть таблицу">
                  <MdExpandMore size={20} />
                </IconButton>
              </HeadTools>
            </CollisionsHead>
            <Grid>
              <colgroup>
                <Col $w={64} />
                <Col $w={90} />
                <Col $w={117} />
                <Col $w={100} />
                <Col $w={182} />
                <Col $w={204} />
                <Col />
              </colgroup>
              <thead>
                <tr>
                  <SelectAllCell>
                    <Box type="checkbox" $accent aria-label="Выбрать все" />
                  </SelectAllCell>
                  {headings.map((h) => (
                    <HeadCell key={h}>{h}</HeadCell>
                  ))}
                </tr>
              </thead>
              <tbody>
                <tr>
                  <SelectCell>
                    <Box type="checkbox" aria-label="Выбрать группу" />
                  </SelectCell>
                  <GroupCell colSpan={6}>
                    <GroupToggle>
                      <MdArrowDropDown size={24} />
                      Неотсортированные
                    </GroupToggle>
                  </GroupCell>
                </tr>
                {[0, 1].map((n) => (
                  <DataRow key={n} $shaded={n === 0}>
                    <SelectCell>
                      <Box type="checkbox" aria-label={`Выбрать коллизию ${n + 1}`} />
                    </SelectCell>
                    {collision.map((value, i) => (
                      <DataCell key={i}>{value}</DataCell>
                    ))}
                  </DataRow>
                ))}
              </tbody>
            </Grid>
            <ScrollTrack />
          </Collisions>
        </Workspace>

        <RightRail>
          {toolGroups.map((group, g) => (
            <ToolGroup key={g}>
              {group.map((tool) => (
                <ToolSlot key={tool.label}>
                  <ToolButton $active={tool.active} aria-label={tool.label}>
                    <Drawing size={32} box={96}>
                      {tool.art}
                    </Drawing>
                  </ToolButton>
                </ToolSlot>
              ))}
            </ToolGroup>
          ))}
        </RightRail>
      </Body>
    </Page>
  );
}
